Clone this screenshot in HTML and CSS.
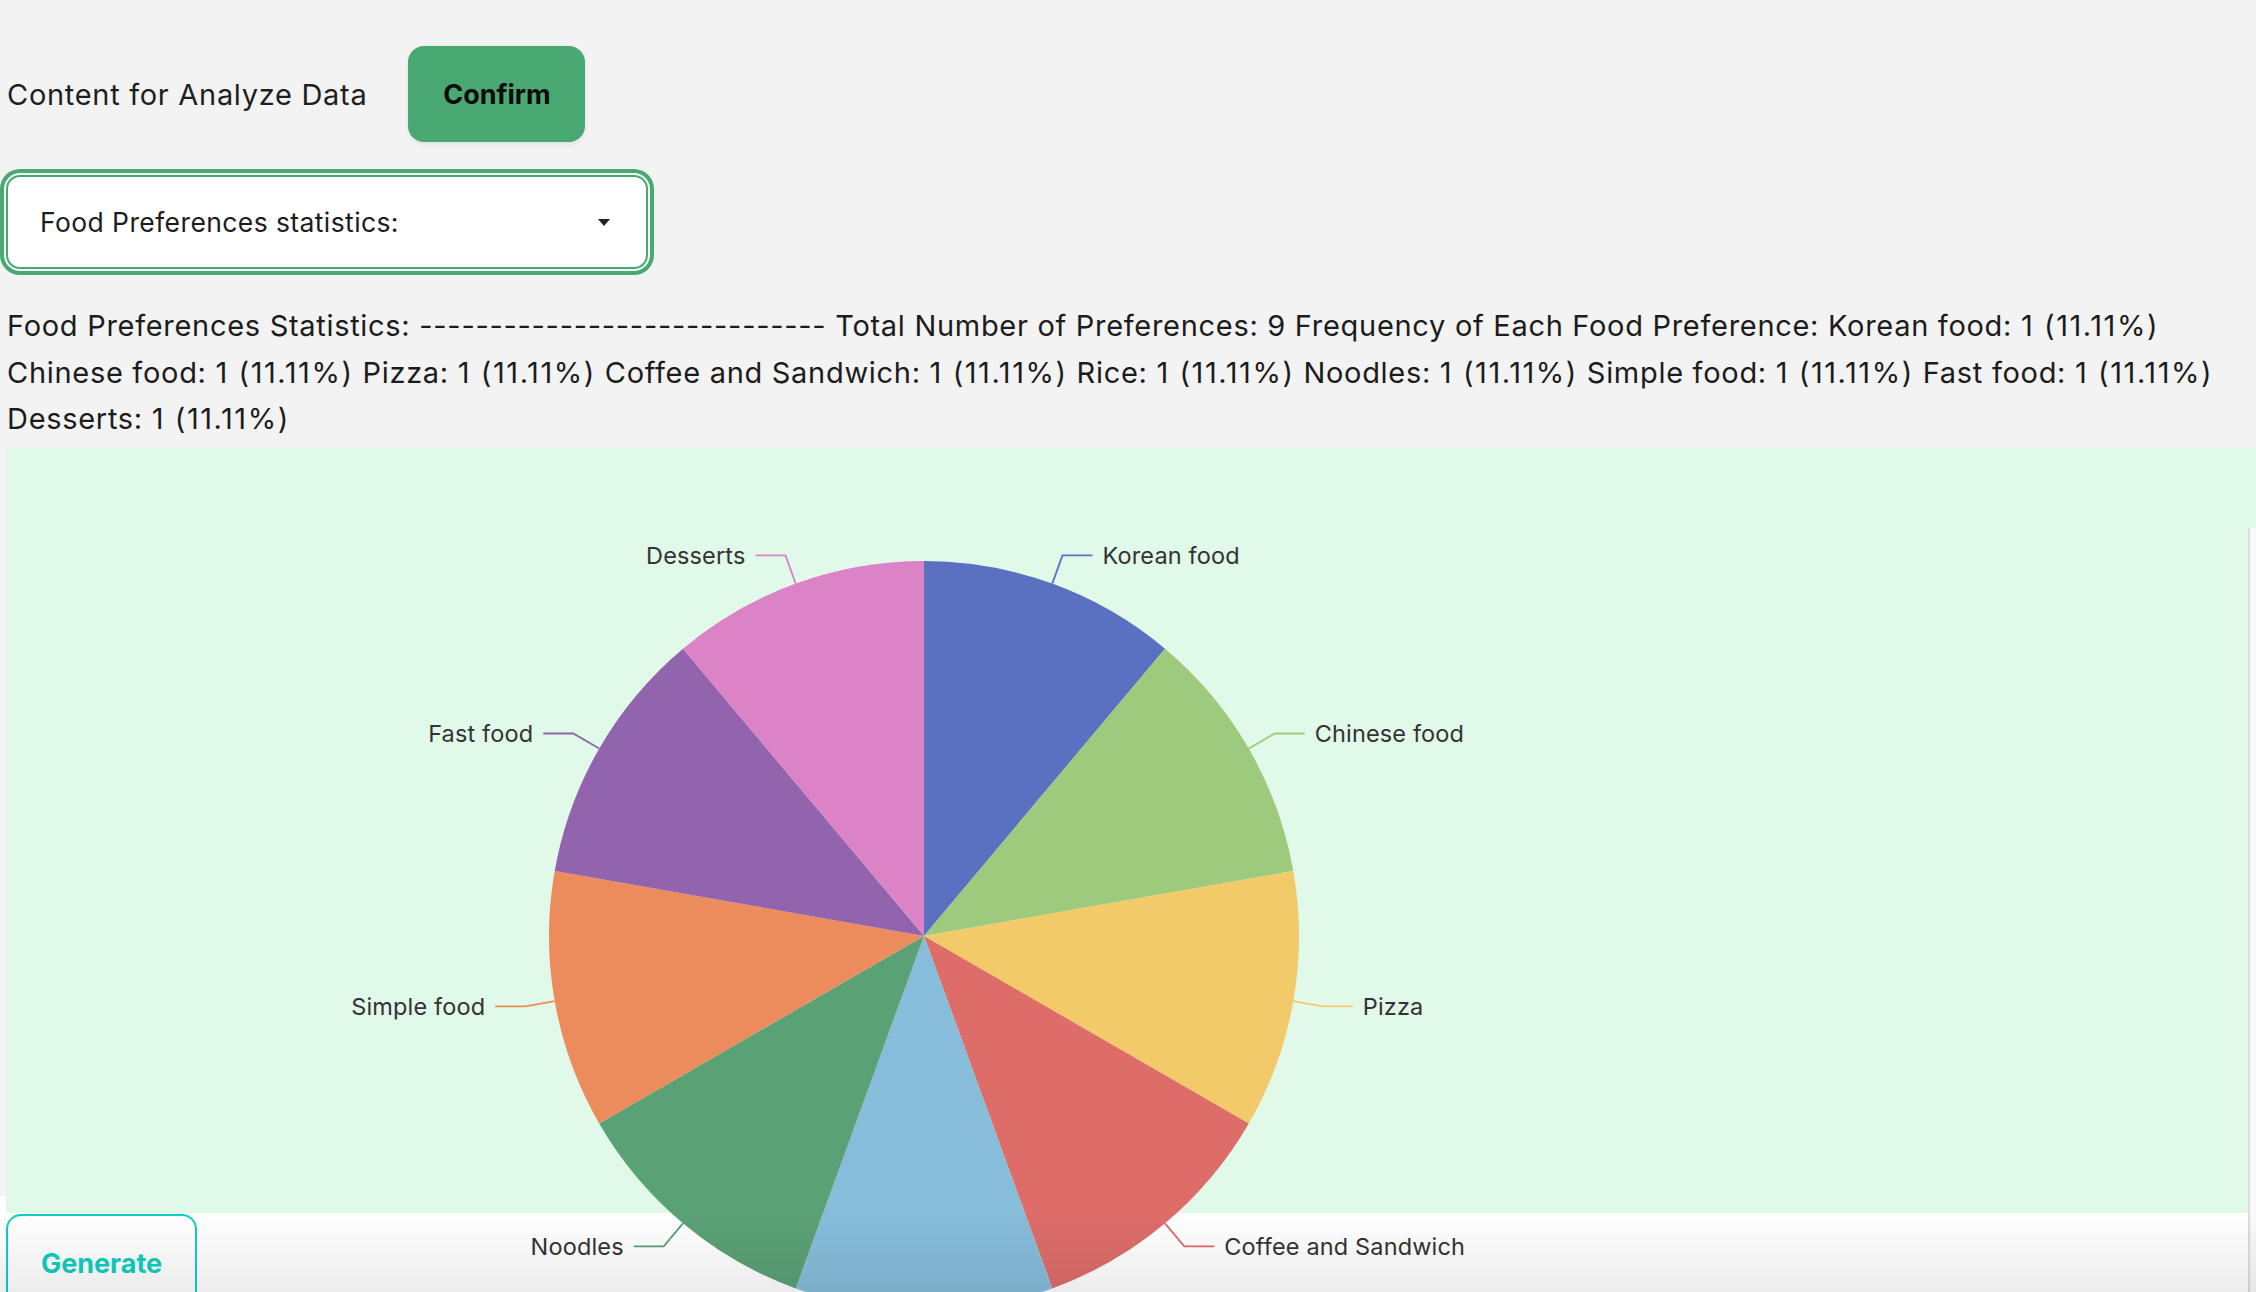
FILE: index.html
```html
<!DOCTYPE html>
<html lang="en">
<head>
<meta charset="utf-8">
<title>Analyze Data</title>
<link rel="stylesheet" href="styles.css">
</head>
<body>
<main class="page">
  <div class="toolbar">
    <span class="toolbar-label">Content for Analyze Data</span>
    <button class="btn-confirm" type="button">Confirm</button>
  </div>
  <div class="select">
    <span class="select-value">Food Preferences statistics:</span>
    <span class="select-caret"></span>
  </div>
  <p class="stats">Food Preferences Statistics: ----------------------------- Total Number of Preferences: 9 Frequency of Each Food Preference: Korean food: <span class="count">1 (11.11%)</span> Chinese food: <span class="count">1 (11.11%)</span> Pizza: <span class="count">1 (11.11%)</span> Coffee and Sandwich: <span class="count">1 (11.11%)</span> Rice: <span class="count">1 (11.11%)</span> Noodles: <span class="count">1 (11.11%)</span> Simple food: <span class="count">1 (11.11%)</span> Fast food: <span class="count">1 (11.11%)</span> Desserts: <span class="count">1 (11.11%)</span></p>
  <section class="chart">
    <svg class="chart-canvas" width="2250" height="960" viewBox="6 448 2250 960" xmlns="http://www.w3.org/2000/svg">
      <g class="slices">
        <path d="M924 936 L924 561 A375 375 0 0 1 1165.0 648.7 Z" fill="#5a70c0"/>
        <path d="M924 936 L1165.0 648.7 A375 375 0 0 1 1293.3 870.9 Z" fill="#9eca7d"/>
        <path d="M924 936 L1293.3 870.9 A375 375 0 0 1 1248.8 1123.5 Z" fill="#f2ca6a"/>
        <path d="M924 936 L1248.8 1123.5 A375 375 0 0 1 1052.3 1288.4 Z" fill="#de6d6a"/>
        <path d="M924 936 L1052.3 1288.4 A375 375 0 0 1 795.7 1288.4 Z" fill="#87bddb"/>
        <path d="M924 936 L795.7 1288.4 A375 375 0 0 1 599.2 1123.5 Z" fill="#5ba176"/>
        <path d="M924 936 L599.2 1123.5 A375 375 0 0 1 554.7 870.9 Z" fill="#ec8b5c"/>
        <path d="M924 936 L554.7 870.9 A375 375 0 0 1 683.0 648.7 Z" fill="#9264ae"/>
        <path d="M924 936 L683.0 648.7 A375 375 0 0 1 924 561 Z" fill="#dc82c6"/>
      </g>
      <g class="label-lines" fill="none" stroke-width="1.8">
        <polyline points="1052.3,583.6 1062.5,555.4 1092.5,555.4" stroke="#5a70c0"/>
        <polyline points="1248.8,748.5 1274.7,733.5 1304.7,733.5" stroke="#9eca7d"/>
        <polyline points="1293.3,1001.1 1322.8,1006.3 1352.8,1006.3" stroke="#f2ca6a"/>
        <polyline points="1165.0,1223.3 1184.3,1246.3 1214.3,1246.3" stroke="#de6d6a"/>
        <polyline points="924,1311 924,1341 954,1341" stroke="#87bddb"/>
        <polyline points="683.0,1223.3 663.7,1246.3 633.7,1246.3" stroke="#5ba176"/>
        <polyline points="554.7,1001.1 525.2,1006.3 495.2,1006.3" stroke="#ec8b5c"/>
        <polyline points="599.2,748.5 573.3,733.5 543.3,733.5" stroke="#9264ae"/>
        <polyline points="795.7,583.6 785.5,555.4 755.5,555.4" stroke="#dc82c6"/>
      </g>
      <g class="labels">
        <text x="1102.5" y="555.4">Korean food</text>
        <text x="1314.7" y="733.5">Chinese food</text>
        <text x="1362.8" y="1006.3">Pizza</text>
        <text x="1224.3" y="1246.3">Coffee and Sandwich</text>
        <text x="964" y="1352">Rice</text>
        <text x="623.7" y="1246.3" text-anchor="end">Noodles</text>
        <text x="485.2" y="1006.3" text-anchor="end">Simple food</text>
        <text x="533.3" y="733.5" text-anchor="end">Fast food</text>
        <text x="745.5" y="555.4" text-anchor="end">Desserts</text>
      </g>
    </svg>
  </section>
  <button class="btn-generate" type="button">Generate</button>
</main>
<div class="side-panel"></div>
<div class="bottom-fade"></div>
</body>
</html>
```

FILE: styles.css
```css
html {
  height: 100%;
}

body {
  margin: 0;
  height: 100%;
  overflow: hidden;
  font-family: "Inter", "Noto Sans", sans-serif;
  color: #1c1c1c;
  background: linear-gradient(to bottom, #f3f3f3 0, #f3f3f3 1196px, #ffffff 1196px, #ffffff 100%);
}

.page {
  padding: 46px 0 0 6px;
}

.toolbar {
  display: flex;
  align-items: center;
  gap: 41px;
  height: 96px;
}

.toolbar-label {
  font-size: 29px;
  letter-spacing: 0.7px;
  color: #1f1f1f;
  padding-left: 1px;
}

.btn-confirm {
  width: 177px;
  height: 96px;
  border: none;
  border-radius: 16px;
  background: #4aa873;
  color: #0b0b0b;
  font-family: "Inter", "Noto Sans", sans-serif;
  font-size: 27px;
  font-weight: 700;
  box-shadow: 0 2px 5px rgba(0, 0, 0, 0.08);
}

.select {
  box-sizing: border-box;
  width: 642px;
  height: 94px;
  margin-top: 33px;
  display: flex;
  align-items: center;
  justify-content: space-between;
  padding: 0 36px 0 32px;
  border: 2px solid #4aa873;
  border-radius: 14px;
  background: #ffffff;
  box-shadow: 0 0 0 2px #f4faf6, 0 0 0 6px #4aa873;
}

.select-value {
  font-size: 26.5px;
  letter-spacing: 0.4px;
  color: #1c1c1c;
}

.select-caret {
  width: 0;
  height: 0;
  border-left: 6.5px solid transparent;
  border-right: 6.5px solid transparent;
  border-top: 7px solid #222222;
}

.stats {
  margin: 34px 0 0 0;
  padding-left: 1px;
  font-size: 29px;
  letter-spacing: 0.7px;
  line-height: 46.7px;
  color: #1c1c1c;
}

.count {
  letter-spacing: 1.55px;
}

.chart {
  height: 765px;
  margin-top: 5px;
  background: #e1f9e9;
  overflow: visible;
}

.chart-canvas {
  display: block;
  overflow: visible;
}

.labels text {
  font-family: "Inter", "Noto Sans", sans-serif;
  font-size: 23.5px;
  letter-spacing: 0.15px;
  fill: #333333;
  dominant-baseline: central;
}

.btn-generate {
  margin-top: 1px;
  width: 191px;
  height: 98px;
  border: 2px solid #0fd0c1;
  border-radius: 15px;
  background: transparent;
  color: #0fcfc0;
  font-family: "Inter", "Noto Sans", sans-serif;
  font-size: 27px;
  font-weight: 700;
}

.side-panel {
  position: fixed;
  top: 528px;
  right: 0;
  bottom: 0;
  width: 6px;
  border-left: 2px solid #dcdcdc;
  background: #f9f9f9;
}

.bottom-fade {
  position: fixed;
  left: 0;
  right: 0;
  bottom: 0;
  height: 80px;
  pointer-events: none;
  background: linear-gradient(to bottom, rgba(0, 0, 0, 0) 0, rgba(0, 0, 0, 0.075) 100%);
}
```
